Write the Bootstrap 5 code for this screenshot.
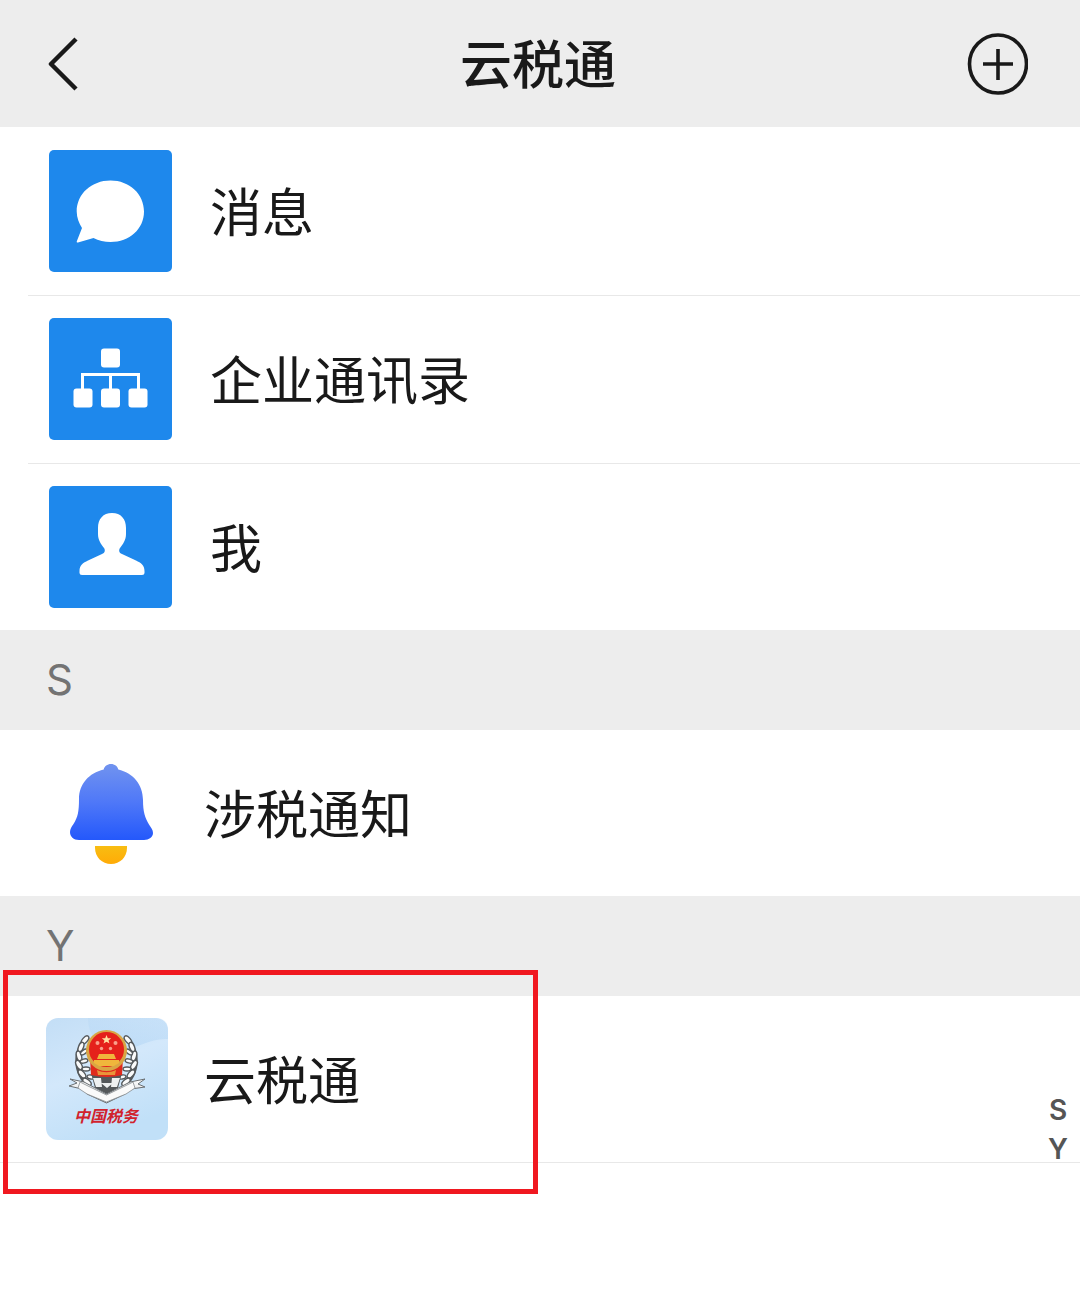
<!DOCTYPE html>
<html lang="zh-CN">
<head>
<meta charset="utf-8">
<meta name="viewport" content="width=device-width, initial-scale=1">
<title>云税通</title>
<link href="https://cdn.jsdelivr.net/npm/bootstrap@5.3.0/dist/css/bootstrap.min.css" rel="stylesheet">
<style>
body{background:#fff;color:#191919;font-family:"Inter","Noto Sans CJK SC",sans-serif}
.topbar{height:127px;background:#ededed;padding:0 52px 0 48px}
.topbar h1{font-size:52px;line-height:80px;font-weight:500;padding-top:4px}
.icon-btn{width:64px;height:64px;color:#191919}
.entry{height:168px;padding-left:48px;font-size:52px;line-height:80px;color:#191919}
.entry span{padding-top:6px}
.entry-lined::after{content:"";position:absolute;left:28px;right:0;bottom:-1px;height:1px;background:#e8e8e8}
.entry-full::after{left:0}
.entry-last{height:167px}
.entry-wide{gap:38px}
.contact{height:166px;padding-left:46px;gap:35px}
.tile{width:124px;height:124px;flex:none}
.logo-tile{width:123px;height:123px;flex:none}
.letter{height:100px;background:#ededed;padding-left:46px;font-size:42px;line-height:100px;color:#737373;font-weight:400}
.highlight{left:3px;top:74px;width:535px;height:224px;border:5px solid #f01820;pointer-events:none}
.index-bar{right:12px;top:195px;font-size:28px;line-height:39px;font-weight:600}
.index-bar a{color:#555}
</style>
<script src="https://cdn.jsdelivr.net/npm/bootstrap@5.3.0/dist/js/bootstrap.bundle.min.js" defer></script>
</head>
<body class="min-vh-100">
<header class="topbar d-flex align-items-center justify-content-between">
  <button type="button" class="icon-btn btn p-0 border-0" aria-label="返回">
    <svg class="d-block" width="64" height="64" viewBox="0 0 64 64" fill="none" stroke="currentColor" stroke-width="4.500" stroke-linejoin="round"><path d="M28 7 3 32 28 57"/></svg>
  </button>
  <h1 class="mb-0">云税通</h1>
  <button type="button" class="icon-btn btn p-0 border-0" aria-label="添加">
    <svg class="d-block" width="64" height="64" viewBox="0 0 64 64" fill="none" stroke="currentColor" stroke-width="3.600"><ellipse cx="34" cy="32" rx="28.500" ry="29"/><path d="M19 32h30M34 17v31"/></svg>
  </button>
</header>
<main>
  <nav aria-label="功能">
    <a href="#msg" class="entry entry-lined entry-wide position-relative d-flex align-items-center text-decoration-none">
      <svg class="tile" viewBox="0 0 124 124"><rect x="1" y="1" width="123" height="122" rx="5" fill="#1e88ec"/><path fill="#fff" d="M62.500 31.500c19 0 33.500 13.500 33.500 31S81.500 93 62.500 93c-6 0-12-1.500-17-4L30 93.500c-1 .2-1.500-.3-1.200-1.200L34 79c-3-5-5.300-10.500-5.300-16.500 0-17.500 14.800-31 33.800-31z"/></svg>
      <span>消息</span>
    </a>
    <a href="#org" class="entry entry-lined entry-wide position-relative d-flex align-items-center text-decoration-none">
      <svg class="tile" viewBox="0 0 124 124"><rect x="1" y="1" width="123" height="122" rx="5" fill="#1e88ec"/><g fill="#fff"><rect x="53" y="31.500" width="19" height="19" rx="3"/><rect x="25.500" y="71.500" width="19" height="19" rx="3"/><rect x="53" y="71.500" width="19" height="19" rx="3"/><rect x="80.500" y="71.500" width="19" height="19" rx="3"/></g><path d="M34.500 73V57.500h56V73M62.500 57.500V73" fill="none" stroke="#fff" stroke-width="3"/></svg>
      <span>企业通讯录</span>
    </a>
    <a href="#me" class="entry entry-last entry-wide d-flex align-items-center text-decoration-none">
      <svg class="tile" viewBox="0 0 124 124"><rect x="1" y="1" width="123" height="122" rx="5" fill="#1e88ec"/><path fill="#fff" d="M64 28C73 28 78 34 78 43V49C78 55 75 59 72 63C70.500 65 71 68 74 69L88 75.500C93 78 96.500 80 96.500 86V88Q96.500 90 94 90H34Q31.500 90 31.500 88V86C31.500 80 35 78 40 75.500L54 69C57 68 57.500 65 56 63C53 59 50 55 50 49V43C50 34 55 28 64 28Z"/></svg>
      <span>我</span>
    </a>
  </nav>
  <section aria-labelledby="letter-s">
    <h2 id="letter-s" class="letter m-0">S</h2>
    <a href="#notice" class="entry contact d-flex align-items-center text-decoration-none">
      <svg class="logo-tile" viewBox="0 0 123 123"><defs><linearGradient id="bell" x1="0" y1="0" x2="0" y2="1"><stop offset="0" stop-color="#7193ef"/><stop offset=".5" stop-color="#4f78f8"/><stop offset="1" stop-color="#2458fb"/></linearGradient><linearGradient id="clap" x1="0" y1="0" x2="0" y2="1"><stop offset="0" stop-color="#f8bd12"/><stop offset="1" stop-color="#ffab07"/></linearGradient></defs><path fill="url(#bell)" d="M65 13c3.800 0 6.500 2.300 7.300 5.500C87 22 97 33.500 97 49c0 12 2 18 6 24.500 2 3 4 5.500 4 8.500 0 4-4 7-9 7H33c-5.500 0-9-3.500-9-8 0-3 1.500-5 3.500-8C32 66 33 60 33 48c0-15 10-26 24.700-29.500C58.500 15.300 61.200 13 65 13z" transform="translate(0 -1)"/><path fill="url(#clap)" d="M49 94h32v2c0 9-7 16-16 16s-16-7-16-16z"/></svg>
      <span>涉税通知</span>
    </a>
  </section>
  <section class="position-relative" aria-labelledby="letter-y">
    <h2 id="letter-y" class="letter m-0">Y</h2>
    <a href="#yst" class="entry entry-lined entry-full contact position-relative d-flex align-items-center text-decoration-none">
      <svg class="logo-tile" viewBox="0 0 123 123">
        <defs>
          <linearGradient id="sky" x1="0" y1="0" x2=".4" y2="1"><stop offset="0" stop-color="#c3def6"/><stop offset=".5" stop-color="#d3e8fb"/><stop offset="1" stop-color="#c1e0f8"/></linearGradient>
          <linearGradient id="haze" x1="0" y1="0" x2="0" y2="1"><stop offset="0" stop-color="#a9d0f3" stop-opacity=".3"/><stop offset="1" stop-color="#a9d0f3" stop-opacity=".75"/></linearGradient>
          <linearGradient id="silver" x1="0" y1="0" x2="0" y2="1"><stop offset="0" stop-color="#fff"/><stop offset="1" stop-color="#c9cccf"/></linearGradient>
          <g id="wreath" fill="#fafafa" stroke="#55595c" stroke-width="1.400">
            <path d="M43 20c-17 10-16 36 1 49" fill="none" stroke-width="3"/>
            <ellipse cx="39" cy="22" rx="5" ry="2.500" transform="rotate(-50 39 22)"/><ellipse cx="35" cy="29" rx="5" ry="2.500" transform="rotate(-70 35 29)"/><ellipse cx="33" cy="38" rx="5" ry="2.500" transform="rotate(75 33 38)"/><ellipse cx="33" cy="47" rx="5" ry="2.500" transform="rotate(60 33 47)"/><ellipse cx="36" cy="56" rx="5" ry="2.500" transform="rotate(50 36 56)"/><ellipse cx="41" cy="64" rx="5" ry="2.500" transform="rotate(40 41 64)"/>
            <ellipse cx="38" cy="34" rx="4" ry="2" transform="rotate(-35 38 34)"/><ellipse cx="38" cy="43" rx="4" ry="2" transform="rotate(-15 38 43)"/><ellipse cx="40" cy="51" rx="4" ry="2"/><ellipse cx="45" cy="59" rx="4" ry="2" transform="rotate(10 45 59)"/>
          </g>
        </defs>
        <rect width="122" height="122" rx="12" fill="url(#sky)"/>
        <path d="M42 0h68q12 0 12 12v9C104 20 92 30 80 31 60 32 42 24 42 0z" fill="url(#haze)" opacity=".6"/>
        <use href="#wreath"/><use href="#wreath" transform="matrix(-1 0 0 1 121 0)"/>
        <path d="M45 55h31l-4 15-11 6-12-6z" fill="#54585a"/><path d="M47 60h8l1 9h-6zM66 60h8l-3 9h-6zM55 65h12l-6 5z" fill="#eef0f0"/>
        <path d="M44 40h33l-1 17q-15 4-31 0z" fill="#e02a1c"/>
        <circle cx="60.500" cy="32.500" r="20.500" fill="#d9a544"/><circle cx="60.500" cy="31.500" r="17.500" fill="#e5211b"/>
        <path d="M53 36h15l2 5H51zM48 42h25v3l-5 3H53l-5-3z" fill="#f0b63c"/><path d="M51 52c6 3 13 3 19 0l-1 5H52z" fill="#e9953a"/>
        <path d="m60.500 17 1.300 3.200h3.400l-2.700 2.200 1 3.200-3-1.900-3 1.900 1-3.200-2.700-2.200h3.400z" fill="#ffe0a0"/><g fill="#f9a08a"><circle cx="51.500" cy="25" r="2"/><circle cx="69.500" cy="25" r="2"/><circle cx="55.500" cy="30.500" r="1.700"/><circle cx="64.500" cy="30.500" r="1.700"/></g>
        <path d="M24 61l14 3 22.500 12L84 64l15-3-7 5 7 3-14 2-6 5-18.500 9L41 76l-5-5-13-3 8-3z" fill="url(#silver)" stroke="#6b7073" stroke-width="1"/>
        <path d="M34 64l-2 6 9 6 19.500 8L80 76l9-6-2-6-8 4-18.500 9L42 68z" fill="#fafafa" stroke="#858a8e" stroke-width=".8"/>
        <text x="28" y="104" font-size="16" font-weight="700" font-style="italic" font-family="Noto Sans CJK SC, sans-serif" fill="#d1222d">中国税务</text>
      </svg>
      <span>云税通</span>
    </a>
    <div class="highlight position-absolute"></div>
    <nav class="index-bar position-absolute d-flex flex-column align-items-center" aria-label="字母索引"><a class="text-decoration-none" href="#letter-s">S</a><a class="text-decoration-none" href="#letter-y">Y</a></nav>
  </section>
</main>
</body>
</html>
